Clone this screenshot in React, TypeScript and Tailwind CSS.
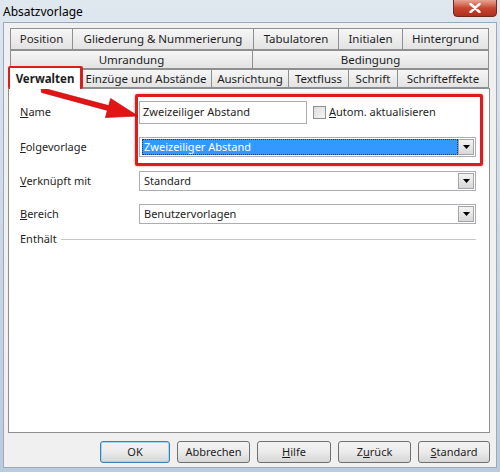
import React from 'react';

const u = (s: string) => <span className="underline">{s}</span>;

function Tab({ w, children, active = false }: { w: number; children: React.ReactNode; active?: boolean }) {
  return (
    <div
      style={{ width: w }}
      className={
        active
          ? 'relative z-10 -mb-px flex h-[21px] items-center justify-center bg-white font-bold'
          : 'flex h-full items-center justify-center border border-l-0 border-[#8e8f8f] bg-gradient-to-b from-[#f6f6f6] to-[#e3e3e3] first:border-l'
      }
    >
      {children}
    </div>
  );
}

function DropBtn() {
  return (
    <div className="flex h-[16px] w-[16px] items-center justify-center border border-[#a4a4a4] bg-gradient-to-b from-[#f4f4f4] to-[#d8d8d8]">
      <svg width="7" height="4" viewBox="0 0 7 4">
        <path d="M0 0h7L3.5 4z" fill="#000" />
      </svg>
    </div>
  );
}

function Combo({ value, selected = false }: { value: string; selected?: boolean }) {
  return (
    <div className="flex h-[20px] w-[337px] items-center border border-[#abadb3] bg-white pl-[2px] pr-[1px]">
      <div
        className={
          selected
            ? 'flex h-[16px] flex-1 items-center border border-dotted border-[#1a3a66] bg-[#3399ff] pl-[1px] text-white'
            : 'flex h-[16px] flex-1 items-center pl-[2px]'
        }
      >
        {value}
      </div>
      <DropBtn />
    </div>
  );
}

function Button({ w, children, def = false }: { w: number; children: React.ReactNode; def?: boolean }) {
  return (
    <div
      style={{ width: w }}
      className={`flex h-[22px] items-center justify-center rounded-[3px] border bg-gradient-to-b from-[#f3f3f3] via-[#ebebeb] to-[#d6d6d6] ${
        def ? 'border-[#3c7fb1] shadow-[inset_0_0_0_1px_#a6d6f2]' : 'border-[#707070]'
      }`}
    >
      {children}
    </div>
  );
}

export default function App() {
  return (
    <div
      className="relative h-[472px] w-[500px] overflow-hidden bg-gradient-to-b from-[#dfe7ef] via-[#cbd8e5] to-[#b9cbdd] text-[11px] text-[#1e1e1e]"
      style={{ fontFamily: '"Noto Sans", "DejaVu Sans", sans-serif' }}
    >
      {/* title bar */}
      <div className="flex h-[22px] items-center justify-between">
        <span className="pl-[3px] pt-[2px] text-[12px] text-black">Absatzvorlage</span>
        <div className="mr-[3px] flex h-[18px] w-[44px] -translate-y-[3px] items-center justify-center rounded-b-[4px] border border-[#6b2a22] bg-gradient-to-b from-[#e8a493] via-[#c8452f] to-[#b0301c]">
          <svg width="12" height="10" viewBox="0 0 12 10">
            <path d="M1.5 1l9 8M10.5 1l-9 8" stroke="#fff" strokeWidth="2.4" strokeLinecap="round" />
          </svg>
        </div>
      </div>

      {/* client */}
      <div className="mx-[3px] flex h-[446px] flex-col border border-[#9aa9bb] bg-[#f0f0f0] pl-[4px] pt-[5px]">
        <div className="ml-[2px] flex w-[479px] flex-col">
          <div className="flex h-[22px] text-[11.5px]">
            <Tab w={63}>Position</Tab>
            <Tab w={181}>Gliederung &amp; Nummerierung</Tab>
            <Tab w={85}>Tabulatoren</Tab>
            <Tab w={64}>Initialen</Tab>
            <Tab w={86}>Hintergrund</Tab>
          </div>
          <div className="flex h-[19px] text-[11.5px]">
            <Tab w={243}>Umrandung</Tab>
            <Tab w={236}>Bedingung</Tab>
          </div>
          <div className="flex h-[19px] items-end text-[11.5px]">
            <Tab w={70} active>
              Verwalten
            </Tab>
            <div className="flex h-[19px]">
              <Tab w={132}>Einzüge und Abstände</Tab>
              <Tab w={77}>Ausrichtung</Tab>
              <Tab w={60}>Textfluss</Tab>
              <Tab w={49}>Schrift</Tab>
              <Tab w={91}>Schrifteffekte</Tab>
            </div>
          </div>
        </div>

        {/* panel */}
        <div className="flex h-[345px] w-[482px] flex-col border border-[#8e8f8f] bg-white pt-[12px]">
          <div className="flex items-center">
            <div className="w-[130px] pl-[11px]">{u('N')}ame</div>
            <div className="flex h-[23px] w-[168px] items-center border border-[#abadb3] pl-[3px]">
              Zweizeiliger Abstand
            </div>
            <div className="ml-[6px] h-[13px] w-[13px] border border-[#8f8f8f] bg-gradient-to-br from-[#dcdcdc] to-[#f6f6f6]" />
            <div className="ml-[3px]">{u('A')}utom. aktualisieren</div>
          </div>
          <div className="mt-[13px] flex items-center">
            <div className="w-[130px] pl-[11px]">{u('F')}olgevorlage</div>
            <Combo value="Zweizeiliger Abstand" selected />
          </div>
          <div className="mt-[14px] flex items-center">
            <div className="w-[130px] pl-[11px]">{u('V')}erknüpft mit</div>
            <Combo value="Standard" />
          </div>
          <div className="mt-[13px] flex items-center">
            <div className="w-[130px] pl-[11px]">{u('B')}ereich</div>
            <Combo value="Benutzervorlagen" />
          </div>
          <div className="mt-[7px] flex items-center pl-[11px] pr-[13px]">
            <span>Enthält</span>
            <div className="ml-[4px] h-px flex-1 bg-[#c8c8c8]" />
          </div>
        </div>

        {/* buttons */}
        <div className="mt-[8px] flex w-[482px] justify-end gap-[7px]">
          <Button w={70} def>
            OK
          </Button>
          <Button w={73}>Abbrechen</Button>
          <Button w={74}>{u('H')}ilfe</Button>
          <Button w={73}>
            Z{u('u')}rück
          </Button>
          <Button w={72}>
            {u('S')}tandard
          </Button>
        </div>
      </div>

      {/* annotations */}
      <div className="pointer-events-none absolute left-[8px] top-[66px] h-[23px] w-[75px] rounded-[2px] border-[3px] border-[#dd1c1c]" />
      <div className="pointer-events-none absolute left-[135px] top-[94px] h-[72px] w-[348px] rounded-[2px] border-[3px] border-[#dd1c1c] shadow-[0_0_3px_rgba(120,0,0,0.4)]" />
      <svg className="pointer-events-none absolute left-0 top-0" width="500" height="472">
        <polygon
          points="41,87.5 108.7,105.6 110.6,98.4 138,116 105.4,117.6 107.3,110.4 41.5,92.5"
          fill="#e21414"
          stroke="#b00c0c"
          strokeWidth="0.6"
        />
      </svg>
    </div>
  );
}
